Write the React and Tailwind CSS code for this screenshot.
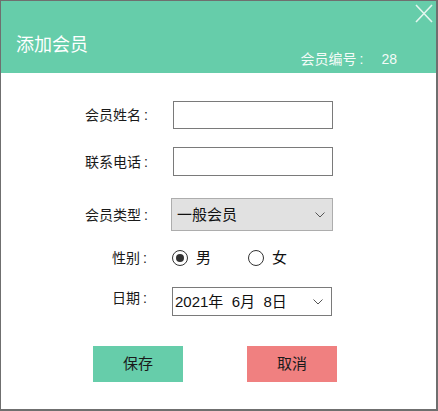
import React, { useState } from "react";

const font = { fontFamily: '"Liberation Sans", "Noto Sans CJK SC", sans-serif' };

const Chevron = () => (
  <svg width="10" height="6" viewBox="0 0 10 6" className="shrink-0">
    <path d="M0.5 0.5 L5 5 L9.5 0.5" fill="none" stroke="#555" strokeWidth="1" />
  </svg>
);

const Label = ({ text, className }) => (
  <div className={"text-right leading-[18px] " + className}>
    {text}
    <span className="ml-[3px] mr-[1px]">:</span>
  </div>
);

const Radio = ({ checked, label, onClick }) => (
  <button type="button" onClick={onClick} className="flex items-center gap-[8px]">
    <span className="flex h-[16px] w-[16px] items-center justify-center rounded-full border border-[#333]">
      {checked && <span className="h-[8px] w-[8px] rounded-full bg-[#333]" />}
    </span>
    <span className="text-[15px] leading-[20px] text-[#111]">{label}</span>
  </button>
);

const App = () => {
  const [sex, setSex] = useState("男");

  return (
    <div
      style={font}
      className="flex h-[411px] w-[438px] flex-col border-l border-t border-r-2 border-b-2 border-[#6f6f6f] bg-white"
    >
      {/* header */}
      <div className="relative flex h-[72px] shrink-0 bg-[#66cdaa] text-white">
        <div className="ml-[15px] mt-[33px] text-[18px] leading-[22px]">添加会员</div>
        <div className="ml-auto mr-[39px] mt-[49px] flex text-[14px] leading-[18px] text-[#f4fbf8]">
          <span>
            会员编号<span className="ml-[3px]">:</span>
          </span>
          <span className="ml-[18px]">28</span>
        </div>
        <button type="button" className="absolute right-[3px] top-[3px]">
          <svg width="18" height="19" viewBox="0 0 18 19">
            <path d="M1 1 L17 18 M17 1 L1 18" stroke="#e4f6ef" strokeWidth="1.6" fill="none" />
          </svg>
        </button>
      </div>

      {/* form */}
      <div className="flex flex-col text-[14px] text-[#1a1a1a]">
        <div className="mt-[28px] flex h-[28px] items-center">
          <Label text="会员姓名" className="w-[148px]" />
          <input className="ml-[24px] h-full w-[160px] border border-[#7a7a7a] px-1 outline-none" />
        </div>

        <div className="mt-[18px] flex h-[29px] items-center">
          <Label text="联系电话" className="w-[148px]" />
          <input className="ml-[24px] h-full w-[160px] border border-[#7a7a7a] px-1 outline-none" />
        </div>

        <div className="mt-[22px] flex h-[33px] items-center">
          <Label text="会员类型" className="w-[148px]" />
          <div className="ml-[22px] flex h-full w-[162px] items-center justify-between border border-[#adadad] bg-[#e1e1e1] pl-[5px] pr-[7px]">
            <span className="text-[15px] leading-[20px] text-[#111]">一般会员</span>
            <Chevron />
          </div>
        </div>

        <div className="mt-[17px] flex h-[20px] items-center">
          <Label text="性别" className="w-[147px]" />
          <div className="ml-[24px] flex items-center gap-[37px]">
            <Radio checked={sex === "男"} label="男" onClick={() => setSex("男")} />
            <Radio checked={sex === "女"} label="女" onClick={() => setSex("女")} />
          </div>
        </div>

        <div className="mt-[19px] flex h-[29px] items-start">
          <Label text="日期" className="mt-[2px] w-[147px]" />
          <div className="ml-[24px] flex h-full w-[160px] items-center justify-between border border-[#7a7a7a] pl-[2px] pr-[8px]">
            <span className="whitespace-pre text-[15px] leading-[20px] text-[#111]">2021年  6月  8日</span>
            <Chevron />
          </div>
        </div>

        <div className="mt-[30px] flex h-[36px]">
          <button type="button" className="ml-[92px] h-full w-[90px] bg-[#66cdaa] text-[15px] text-[#1a1a1a]">
            保存
          </button>
          <button type="button" className="ml-[64px] h-full w-[90px] bg-[#f08080] text-[15px] text-[#1a1a1a]">
            取消
          </button>
        </div>
      </div>
    </div>
  );
};

export default App;
